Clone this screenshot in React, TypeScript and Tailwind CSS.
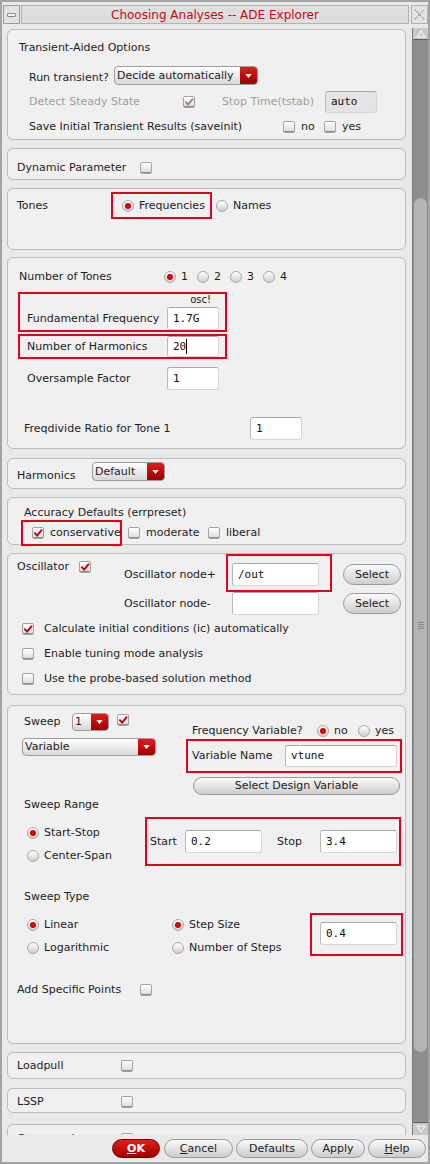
import React from "react";

// small widgets that mimic the Cadence/Qt look
function Check({ on = false, dim = false }: { on?: boolean; dim?: boolean }) {
  return (
    <span className="inline-flex shrink-0 w-[12px] h-[12px] items-center justify-center rounded-[2px] border border-[#a3a3a3] bg-gradient-to-b from-white to-[#dcdcdc] shadow-[inset_0_-1px_0_#8c8c8c]">
      {on && (
        <svg viewBox="0 0 12 12" className="w-[11px] h-[11px]">
          <path
            d="M2.2 5.6 L4.9 8.6 L10.3 2"
            fill="none"
            stroke={dim ? "#b57a7a" : "#c80000"}
            strokeWidth="2.3"
            strokeLinecap="round"
            strokeLinejoin="round"
          />
        </svg>
      )}
    </span>
  );
}

function Radio({ on = false }: { on?: boolean }) {
  return (
    <span className="inline-flex shrink-0 w-[12px] h-[12px] items-center justify-center rounded-full border border-[#a9a9a9] bg-gradient-to-b from-white to-[#cfcfcf]">
      {on && <span className="w-[6px] h-[6px] rounded-full bg-[#d20000]" />}
    </span>
  );
}

function Combo({ label, cls }: { label: string; cls: string }) {
  return (
    <div className={`flex shrink-0 rounded-[4px] border border-[#9c9c9c] bg-gradient-to-b from-white to-[#d8d8d8] overflow-hidden ${cls}`}>
      <span className="flex-1 pl-[2px] self-center leading-[14px] whitespace-nowrap overflow-hidden">{label}</span>
      <span className="w-[17px] flex items-center justify-center bg-gradient-to-b from-[#e41a1a] to-[#9c0000]">
        <svg viewBox="0 0 8 5" className="w-[7px] h-[4px]">
          <path d="M0 0 H8 L4 5Z" fill="white" />
        </svg>
      </span>
    </div>
  );
}

function Field({ value = "", cls, gray = false, caret = false }: { value?: string; cls: string; gray?: boolean; caret?: boolean }) {
  return (
    <div
      className={`flex shrink-0 items-center pl-[5px] rounded-[3px] border border-[#d6d6d6] border-t-[#a8a8a8] border-l-[#b8b8b8] text-[11px] [font-family:'DejaVu_Sans_Mono',monospace] text-[#111] ${gray ? "bg-[#e4e4e4]" : "bg-white"} ${cls}`}
    >
      <span>{value}</span>
      {caret && <span className="w-[1px] h-[15px] bg-black" />}
    </div>
  );
}

function Pill({ children, cls }: { children: React.ReactNode; cls: string }) {
  return (
    <div className={`flex shrink-0 items-center justify-center rounded-full border border-[#9a9a9a] bg-gradient-to-b from-[#fbfbfb] to-[#cdcdcd] ${cls}`}>
      {children}
    </div>
  );
}

function Panel({ cls, children }: { cls: string; children?: React.ReactNode }) {
  return <div className={`shrink-0 rounded-[6px] border border-[#bcbcbc] bg-[#f0f0f0] ${cls}`}>{children}</div>;
}

export default function App() {
  return (
    <div className="w-[430px] h-[1164px] flex flex-col overflow-hidden border-2 border-[#a4a4a4] bg-[#e9e9e9] text-[11px] leading-[14px] text-[#1c1c1c] [font-family:'DejaVu_Sans',sans-serif]">
      {/* title bar */}
      <div className="flex mt-[3px] h-[19px] pl-[1px] shrink-0">
        <div className="w-[17px] flex items-center justify-center border border-[#9c9c9c] bg-[#e3e3e3]">
          <span className="w-[9px] h-[4px] rounded-[1px] border border-[#8a8a8a] bg-[#f4f4f4]" />
        </div>
        <div className="flex-1 ml-[1px] flex items-center justify-center border border-[#b3b3b3] bg-[#dedede] text-[12px] text-[#d0021b]">
          Choosing Analyses -- ADE Explorer
        </div>
        <div className="w-[17px] ml-[2px] flex items-center justify-center border border-[#b3b3b3] bg-[#e3e3e3]">
          <svg viewBox="0 0 12 12" className="w-[11px] h-[11px]">
            <path d="M1 1 L11 11 M11 1 L1 11" stroke="#9a9a9a" strokeWidth="1.6" strokeDasharray="1.4 1.2" fill="none" />
          </svg>
        </div>
      </div>

      {/* main area */}
      <div className="flex h-[1111px] shrink-0">
        <div className="w-[399px] ml-[5px] pt-[5px] flex flex-col overflow-hidden">
          {/* Transient-aided */}
          <Panel cls="h-[111px] pt-[11px]">
            <div className="pl-[11px]">Transient-Aided Options</div>
            <div className="flex items-start pl-[21px] mt-[11px]">
              <span className="w-[85px] shrink-0 mt-[5px]">Run transient?</span>
              <Combo label="Decide automatically" cls="w-[144px] h-[19px]" />
            </div>
            <div className="flex items-center pl-[21px] mt-[6px] h-[22px] text-[#9e9e9e]">
              <span className="w-[154px] shrink-0">Detect Steady State</span>
              <Check on dim />
              <span className="ml-[27px] w-[103px] shrink-0">Stop Time(tstab)</span>
              <Field value="auto" gray cls="w-[52px] h-[22px]" />
            </div>
            <div className="flex items-center pl-[21px] mt-[7px] h-[14px]">
              <span className="w-[254px] shrink-0">Save Initial Transient Results (saveinit)</span>
              <span className="w-[41px] flex items-center gap-[6px]">
                <Check />
                no
              </span>
              <span className="flex items-center gap-[6px]">
                <Check />
                yes
              </span>
            </div>
          </Panel>

          {/* Dynamic parameter */}
          <Panel cls="h-[32px] mt-[8px] pt-[12px]">
            <div className="flex items-center pl-[9px] h-[14px]">
              <span className="w-[123px] shrink-0">Dynamic Parameter</span>
              <Check />
            </div>
          </Panel>

          {/* Tones */}
          <Panel cls="h-[62px] mt-[8px] pt-[3px]">
            <div className="flex items-center pl-[9px]">
              <span className="w-[94px] shrink-0">Tones</span>
              <div className="w-[101px] h-[27px] flex items-center gap-[5px] pl-[9px] border-2 border-[#e2001a]">
                <Radio on />
                Frequencies
              </div>
              <span className="ml-[4px] flex items-center gap-[5px]">
                <Radio />
                Names
              </span>
            </div>
          </Panel>

          {/* Number of tones */}
          <Panel cls="h-[192px] mt-[7px] pt-[12px]">
            <div className="flex items-center pl-[11px] h-[14px]">
              <span className="w-[145px] shrink-0">Number of Tones</span>
              {["1", "2", "3", "4"].map((n) => (
                <span key={n} className="w-[33px] flex items-center gap-[5px]">
                  <Radio on={n === "1"} />
                  {n}
                </span>
              ))}
            </div>
            <div className="ml-[10px] mt-[8px] w-[209px] h-[40px] border-2 border-[#e2001a]">
              <div className="h-[13px] leading-[12px] text-right pr-[14px] text-[10px]">osc!</div>
              <div className="flex items-center pl-[7px]">
                <span className="w-[140px] shrink-0">Fundamental Frequency</span>
                <Field value="1.7G" cls="w-[52px] h-[23px]" />
              </div>
            </div>
            <div className="ml-[10px] mt-[2px] w-[209px] h-[25px] flex items-center pl-[7px] border-2 border-[#e2001a]">
              <span className="w-[140px] shrink-0">Number of Harmonics</span>
              <Field value="20" caret cls="w-[52px] h-[21px]" />
            </div>
            <div className="flex items-center pl-[19px] mt-[8px]">
              <span className="w-[140px] shrink-0">Oversample Factor</span>
              <Field value="1" cls="w-[52px] h-[23px]" />
            </div>
            <div className="flex items-center pl-[16px] mt-[27px]">
              <span className="w-[226px] shrink-0">Freqdivide Ratio for Tone 1</span>
              <Field value="1" cls="w-[52px] h-[23px]" />
            </div>
          </Panel>

          {/* Harmonics */}
          <Panel cls="h-[31px] mt-[9px] pt-[3px]">
            <div className="flex items-start pl-[9px]">
              <span className="w-[75px] shrink-0 mt-[7px]">Harmonics</span>
              <Combo label="Default" cls="w-[73px] h-[19px]" />
            </div>
          </Panel>

          {/* Accuracy */}
          <Panel cls="h-[48px] mt-[8px] pt-[8px]">
            <div className="pl-[16px]">Accuracy Defaults (errpreset)</div>
            <div className="flex items-center">
              <div className="ml-[13px] w-[101px] h-[26px] flex items-center gap-[6px] pl-[9px] border-2 border-[#e2001a]">
                <Check on />
                conservative
              </div>
              <span className="ml-[6px] w-[80px] flex items-center gap-[6px]">
                <Check />
                moderate
              </span>
              <span className="flex items-center gap-[6px]">
                <Check />
                liberal
              </span>
            </div>
          </Panel>

          {/* Oscillator */}
          <Panel cls="h-[142px] mt-[8px]">
            <div className="flex pl-[9px]">
              <div className="w-[107px] shrink-0 flex items-center h-[14px] mt-[6px]">
                <span className="w-[62px] shrink-0">Oscillator</span>
                <Check on />
              </div>
              <div className="flex flex-col pt-[9px] gap-[6px]">
                <div className="flex items-center">
                  <span className="w-[108px] shrink-0">Oscillator node+</span>
                  <div className="relative">
                    <Field value="/out" cls="w-[87px] h-[23px]" />
                    <div className="absolute -left-[6px] -top-[9px] w-[106px] h-[38px] border-2 border-[#e2001a]" />
                  </div>
                  <Pill cls="ml-[24px] w-[58px] h-[21px]">Select</Pill>
                </div>
                <div className="flex items-center">
                  <span className="w-[108px] shrink-0">Oscillator node-</span>
                  <Field cls="w-[87px] h-[23px]" />
                  <Pill cls="ml-[24px] w-[58px] h-[21px]">Select</Pill>
                </div>
              </div>
            </div>
            <div className="flex flex-col gap-[11px] pl-[14px] mt-[7px]">
              <div className="flex items-center gap-[10px] h-[14px]">
                <Check on />
                Calculate initial conditions (ic) automatically
              </div>
              <div className="flex items-center gap-[10px] h-[14px]">
                <Check />
                Enable tuning mode analysis
              </div>
              <div className="flex items-center gap-[10px] h-[14px]">
                <Check />
                Use the probe-based solution method
              </div>
            </div>
          </Panel>

          {/* Sweep */}
          <Panel cls="h-[339px] mt-[10px]">
            <div className="flex pl-[14px]">
              <div className="w-[134px] shrink-0 pt-[7px]">
                <div className="flex items-center h-[18px]">
                  <span className="w-[50px] pl-[2px] shrink-0">Sweep</span>
                  <Combo label="1" cls="w-[37px] h-[18px]" />
                  <span className="ml-[8px]">
                    <Check on />
                  </span>
                </div>
                <Combo label="Variable" cls="mt-[7px] w-[134px] h-[18px]" />
              </div>
              <div className="ml-[30px] w-[216px] shrink-0 pt-[18px]">
                <div className="flex items-center pl-[6px] h-[14px]">
                  <span className="w-[125px] shrink-0">Frequency Variable?</span>
                  <span className="w-[41px] flex items-center gap-[5px]">
                    <Radio on />
                    no
                  </span>
                  <span className="flex items-center gap-[5px]">
                    <Radio />
                    yes
                  </span>
                </div>
                <div className="mt-[1px] h-[34px] flex items-center pl-[4px] border-2 border-[#e2001a]">
                  <span className="w-[93px] shrink-0">Variable Name</span>
                  <Field value="vtune" cls="w-[112px] h-[22px]" />
                </div>
                <Pill cls="mt-[4px] ml-[7px] w-[207px] h-[18px]">Select Design Variable</Pill>
              </div>
            </div>

            <div className="pl-[16px] mt-[3px]">Sweep Range</div>
            <div className="flex pl-[19px] mt-[5px]">
              <div className="w-[118px] shrink-0 flex flex-col gap-[9px] pt-[9px]">
                <span className="flex items-center gap-[5px] h-[14px]">
                  <Radio on />
                  Start-Stop
                </span>
                <span className="flex items-center gap-[5px] h-[14px]">
                  <Radio />
                  Center-Span
                </span>
              </div>
              <div className="w-[256px] h-[49px] flex items-center pl-[3px] border-2 border-[#e2001a]">
                <span className="w-[35px] shrink-0">Start</span>
                <Field value="0.2" cls="w-[77px] h-[23px]" />
                <span className="ml-[15px] w-[43px] shrink-0">Stop</span>
                <Field value="3.4" cls="w-[77px] h-[23px]" />
              </div>
            </div>

            <div className="pl-[16px] mt-[24px]">Sweep Type</div>
            <div className="flex pl-[19px] mt-[9px]">
              <div className="w-[145px] shrink-0 flex flex-col gap-[9px] pt-[5px]">
                <span className="flex items-center gap-[5px] h-[14px]">
                  <Radio on />
                  Linear
                </span>
                <span className="flex items-center gap-[5px] h-[14px]">
                  <Radio />
                  Logarithmic
                </span>
              </div>
              <div className="w-[138px] shrink-0 flex flex-col gap-[9px] pt-[5px]">
                <span className="flex items-center gap-[5px] h-[14px]">
                  <Radio on />
                  Step Size
                </span>
                <span className="flex items-center gap-[5px] h-[14px]">
                  <Radio />
                  Number of Steps
                </span>
              </div>
              <div className="w-[93px] h-[43px] pl-[8px] pt-[7px] border-2 border-[#e2001a]">
                <Field value="0.4" cls="w-[77px] h-[23px]" />
              </div>
            </div>

            <div className="flex items-center pl-[9px] mt-[27px] h-[14px]">
              <span className="w-[123px] shrink-0">Add Specific Points</span>
              <Check />
            </div>
          </Panel>

          <Panel cls="h-[27px] mt-[8px] pt-[6px]">
            <div className="flex items-center pl-[9px] h-[14px]">
              <span className="w-[104px] shrink-0">Loadpull</span>
              <Check />
            </div>
          </Panel>
          <Panel cls="h-[25px] mt-[9px] pt-[6px]">
            <div className="flex items-center pl-[9px] h-[14px]">
              <span className="w-[104px] shrink-0">LSSP</span>
              <Check />
            </div>
          </Panel>
          <Panel cls="h-[30px] mt-[11px] pt-[7px]">
            <div className="flex items-center pl-[9px] h-[14px]">
              <span className="w-[104px] shrink-0">Compression</span>
              <Check />
            </div>
          </Panel>
        </div>

        {/* scrollbar */}
        <div className="ml-[6px] mt-[4px] w-[16px] flex flex-col border-l border-[#7a7a7a] bg-[#8e8e8e]">
          <div className="h-[12px] shrink-0 flex items-center justify-center bg-[#c9c9c9] border-b border-[#5e5e5e]">
            <svg viewBox="0 0 10 8" className="w-[10px] h-[8px]">
              <path d="M1 7 L5 1 L9 7Z" fill="none" stroke="white" strokeWidth="1" />
            </svg>
          </div>
          <div className="flex-1 flex flex-col">
            <div className="mt-[158px] mx-[1px] h-[854px] rounded-[7px] bg-[#b4b4b4] flex items-center justify-center">
              <div className="flex flex-col gap-[1px]">
                <span className="w-[6px] h-[1px] bg-[#8a8a8a]" />
                <span className="w-[6px] h-[1px] bg-[#8a8a8a]" />
                <span className="w-[6px] h-[1px] bg-[#8a8a8a]" />
                <span className="w-[6px] h-[1px] bg-[#8a8a8a]" />
              </div>
            </div>
          </div>
          <div className="h-[13px] shrink-0 flex items-center justify-center bg-[#c9c9c9] border-t border-[#5e5e5e]">
            <svg viewBox="0 0 10 8" className="w-[10px] h-[8px]">
              <path d="M1 1 L5 7 L9 1Z" fill="none" stroke="white" strokeWidth="1" />
            </svg>
          </div>
        </div>
      </div>

      {/* button bar */}
      <div className="flex-1 flex items-center justify-end gap-[3px] pr-[2px]">
        <div className="w-[48px] h-[19px] mr-[1px] flex items-center justify-center rounded-full border border-[#7a0000] bg-gradient-to-b from-[#e41e1e] to-[#a00000] text-white font-bold">
          <span>
            <u>O</u>K
          </span>
        </div>
        <Pill cls="w-[69px] h-[19px]">
          <span>
            <u>C</u>ancel
          </span>
        </Pill>
        <Pill cls="w-[72px] h-[19px]">Defaults</Pill>
        <Pill cls="w-[54px] h-[19px]">Apply</Pill>
        <Pill cls="w-[58px] h-[19px]">
          <span>
            <u>H</u>elp
          </span>
        </Pill>
      </div>
    </div>
  );
}
